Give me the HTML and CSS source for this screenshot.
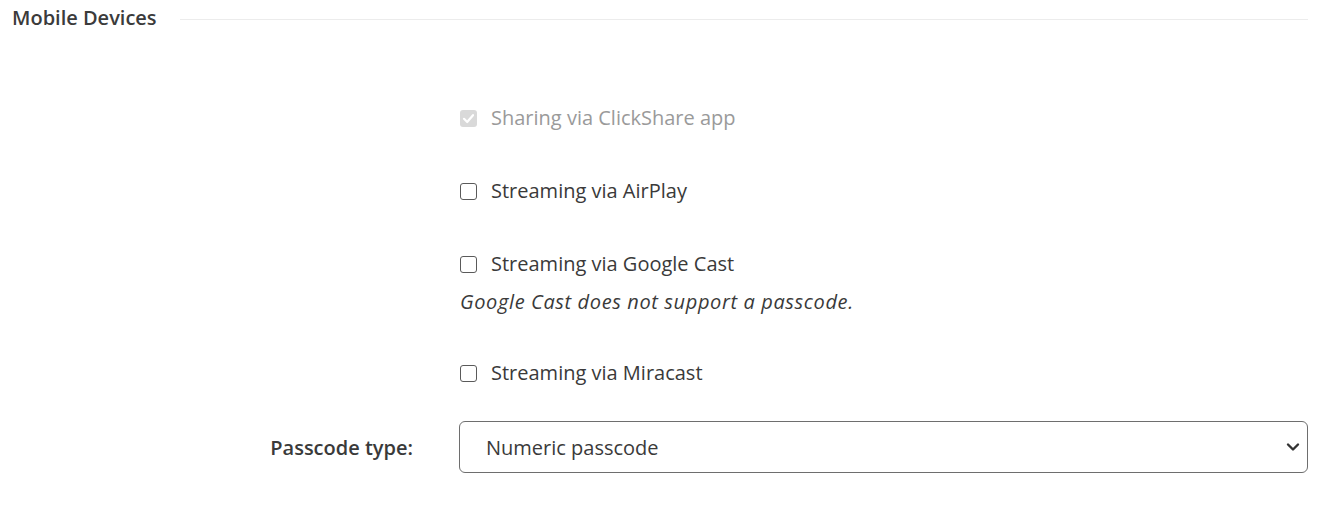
FILE: index.html
```html
<!DOCTYPE html>
<html>
<head>
<meta charset="utf-8">
<link rel="stylesheet" href="styles.css">
</head>
<body>
<section class="panel">
  <header class="section-head">
    <h2 class="section-title">Mobile Devices</h2>
    <div class="section-rule"></div>
  </header>
  <div class="options">
    <label class="check-row disabled row-first">
      <span class="box checked"><svg viewBox="0 0 17 17" width="17" height="17"><path d="M4 8.8 L7.2 12 L13 5.2" fill="none" stroke="#fff" stroke-width="2.2" stroke-linecap="round" stroke-linejoin="round"/></svg></span>
      <span class="check-label">Sharing via ClickShare app</span>
    </label>
    <label class="check-row row-gap">
      <span class="box"></span>
      <span class="check-label">Streaming via AirPlay</span>
    </label>
    <label class="check-row row-gap">
      <span class="box"></span>
      <span class="check-label">Streaming via Google Cast</span>
    </label>
    <p class="note">Google Cast does not support a passcode.</p>
    <label class="check-row row-after-note">
      <span class="box"></span>
      <span class="check-label">Streaming via Miracast</span>
    </label>
  </div>
  <div class="field-row">
    <div class="field-label">Passcode type:</div>
    <div class="select">
      <span class="select-value">Numeric passcode</span>
      <svg class="chevron" viewBox="0 0 14 10" width="14" height="10"><path d="M2 2.5 L7 7.5 L12 2.5" fill="none" stroke="#333" stroke-width="2.4" stroke-linecap="round" stroke-linejoin="round"/></svg>
    </div>
  </div>
</section>
</body>
</html>
```

FILE: styles.css
```css
* { box-sizing: border-box; }
html, body { margin: 0; padding: 0; background: #fff; }
body {
  font-family: "Open Sans", "Noto Sans", sans-serif;
  font-size: 20px;
  color: #3a3a3a;
}
.panel {
  padding: 3px 31px 0 12px;
}
.section-head {
  display: flex;
  align-items: center;
  height: 30px;
}
.section-title {
  margin: 0;
  font-size: 20px;
  font-weight: 600;
  color: #3b3b3b;
  line-height: 30px;
  white-space: nowrap;
}
.section-rule {
  flex: 1;
  height: 1px;
  background: #ececec;
  margin-left: 23px;
  margin-top: 2px;
}
.options {
  display: flex;
  flex-direction: column;
  padding-left: 448px;
  padding-top: 70px;
}
.check-row {
  display: flex;
  align-items: center;
  height: 30px;
  line-height: 30px;
}
.row-gap { margin-top: 43px; }
.row-after-note { margin-top: 41px; }
.box {
  width: 17px;
  height: 17px;
  border: 1.6px solid #5a5a5a;
  border-radius: 3px;
  margin-right: 14px;
  display: flex;
  align-items: center;
  justify-content: center;
  flex: none;
}
.box.checked {
  border: none;
  background: #d9d9d9;
}
.box svg { display: block; }
.check-label { color: #3a3a3a; }
.disabled .check-label { color: #9a9a9a; }
.note {
  margin: 8px 0 0 0;
  font-style: italic;
  letter-spacing: 0.62px;
  line-height: 30px;
  color: #3a3a3a;
}
.field-row {
  display: flex;
  align-items: center;
  margin-top: 33px;
}
.field-label {
  width: 447px;
  padding-right: 46px;
  text-align: right;
  font-weight: 600;
  color: #3a3a3a;
  flex: none;
}
.select {
  flex: 1;
  height: 52px;
  border: 1.4px solid #6e6e6e;
  border-radius: 6px;
  display: flex;
  align-items: center;
  justify-content: space-between;
  padding: 0 7px 0 26px;
}
.select-value { color: #3a3a3a; }
.chevron { display: block; }
```
